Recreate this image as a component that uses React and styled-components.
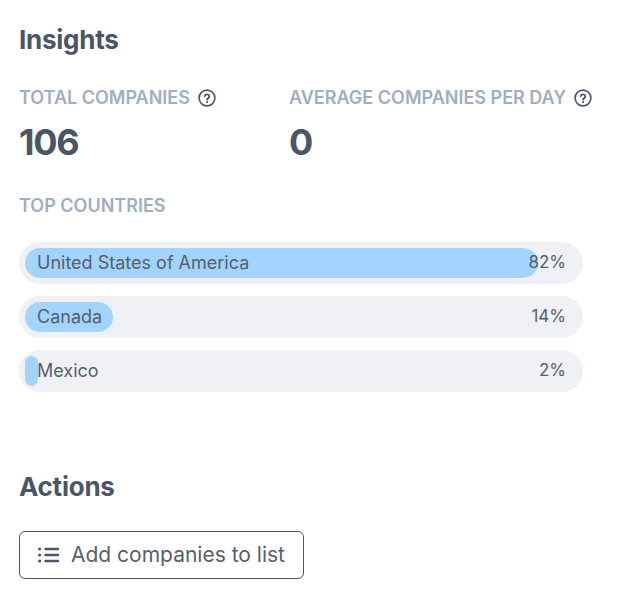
import styled, { createGlobalStyle } from "styled-components";

const GlobalStyle = createGlobalStyle`
  body {
    margin: 0;
    background: #ffffff;
    font-family: Inter, "Liberation Sans", sans-serif;
    color: #4a5568;
  }
`;

const countries = [
  { name: "United States of America", percent: 82 },
  { name: "Canada", percent: 14 },
  { name: "Mexico", percent: 2 },
];

function HelpIcon() {
  return (
    <HelpSvg viewBox="0 0 18 18" fill="none">
      <circle cx="9" cy="9" r="7.9" stroke="#4a5568" strokeWidth="1.6" />
      <path
        d="M6.7 7.1a2.35 2.35 0 0 1 4.6.4c0 1.5-2.2 1.8-2.2 3.1"
        stroke="#4a5568"
        strokeWidth="1.9"
        strokeLinecap="round"
      />
      <circle cx="9.05" cy="13.1" r="1.1" fill="#4a5568" />
    </HelpSvg>
  );
}

function ListIcon() {
  return (
    <ListSvg viewBox="0 0 21 16" fill="#4a5568">
      <circle cx="1.6" cy="2" r="1.6" />
      <circle cx="1.6" cy="8" r="1.6" />
      <circle cx="1.6" cy="14" r="1.6" />
      <rect x="6.5" y="0.8" width="14.5" height="2.4" rx="0.6" />
      <rect x="6.5" y="6.8" width="14.5" height="2.4" rx="0.6" />
      <rect x="6.5" y="12.8" width="14.5" height="2.4" rx="0.6" />
    </ListSvg>
  );
}

export default function App() {
  return (
    <Page>
      <GlobalStyle />
      <Heading>Insights</Heading>
      <Stats>
        <Stat>
          <StatLabel>
            TOTAL COMPANIES <HelpIcon />
          </StatLabel>
          <StatValue>106</StatValue>
        </Stat>
        <Stat>
          <StatLabel>
            AVERAGE COMPANIES PER DAY <HelpIcon />
          </StatLabel>
          <StatValue>0</StatValue>
        </Stat>
      </Stats>
      <StatLabel>TOP COUNTRIES</StatLabel>
      <CountryList>
        {countries.map((country) => (
          <Track key={country.name}>
            <Fill style={{ width: country.percent * 6.26 }} />
            <CountryName>{country.name}</CountryName>
            <Percent>{country.percent}%</Percent>
          </Track>
        ))}
      </CountryList>
      <ActionsHeading>Actions</ActionsHeading>
      <ActionButton>
        <ListIcon />
        <ButtonText>Add companies to list</ButtonText>
      </ActionButton>
    </Page>
  );
}

const Page = styled.div`
  width: 622px;
  height: 604px;
  box-sizing: border-box;
  padding: 24px 39px 0 19px;
  overflow: hidden;
`;

const Heading = styled.h2`
  margin: 0;
  font-size: 26px;
  line-height: 32px;
  font-weight: 700;
  letter-spacing: -0.25px;
  color: #4a5568;
`;

const ActionsHeading = styled(Heading)`
  margin-top: 79px;
`;

const Stats = styled.div`
  display: flex;
  margin-top: 30px;
  margin-bottom: 30px;
`;

const Stat = styled.div`
  width: 270px;
  flex-shrink: 0;
`;

const StatLabel = styled.div`
  display: flex;
  align-items: center;
  gap: 8px;
  font-size: 18px;
  line-height: 24px;
  font-weight: 600;
  color: #a0aec0;
  white-space: nowrap;
`;

const HelpSvg = styled.svg`
  width: 18px;
  height: 18px;
  flex-shrink: 0;
`;

const StatValue = styled.div`
  margin-top: 10px;
  font-size: 36px;
  line-height: 44px;
  font-weight: 700;
  letter-spacing: -1.3px;
  color: #4a5568;
`;

const CountryList = styled.div`
  display: flex;
  flex-direction: column;
  gap: 12px;
  margin-top: 24px;
`;

const Track = styled.div`
  position: relative;
  display: flex;
  align-items: center;
  justify-content: space-between;
  height: 42px;
  box-sizing: border-box;
  padding: 0 18px 2px;
  border-radius: 21px;
  background: #f0f1f5;
  font-size: 18px;
  color: #555f72;
`;

const Fill = styled.div`
  position: absolute;
  left: 6px;
  top: 6px;
  bottom: 6px;
  border-radius: 15px;
  background: #a3d3ff;
`;

const CountryName = styled.span`
  position: relative;
`;

const Percent = styled.span`
  position: relative;
  left: 1px;
  font-size: 17px;
`;

const ActionButton = styled.button`
  display: flex;
  align-items: center;
  gap: 12px;
  margin-top: 28px;
  height: 48px;
  padding: 0 18px;
  box-sizing: border-box;
  border: 1px solid #4a5568;
  border-radius: 6px;
  background: #ffffff;
  font-family: inherit;
  font-size: 21px;
  color: #555f72;
`;

const ButtonText = styled.span`
  margin-top: -2px;
`;

const ListSvg = styled.svg`
  width: 21px;
  height: 16px;
  flex-shrink: 0;
`;
